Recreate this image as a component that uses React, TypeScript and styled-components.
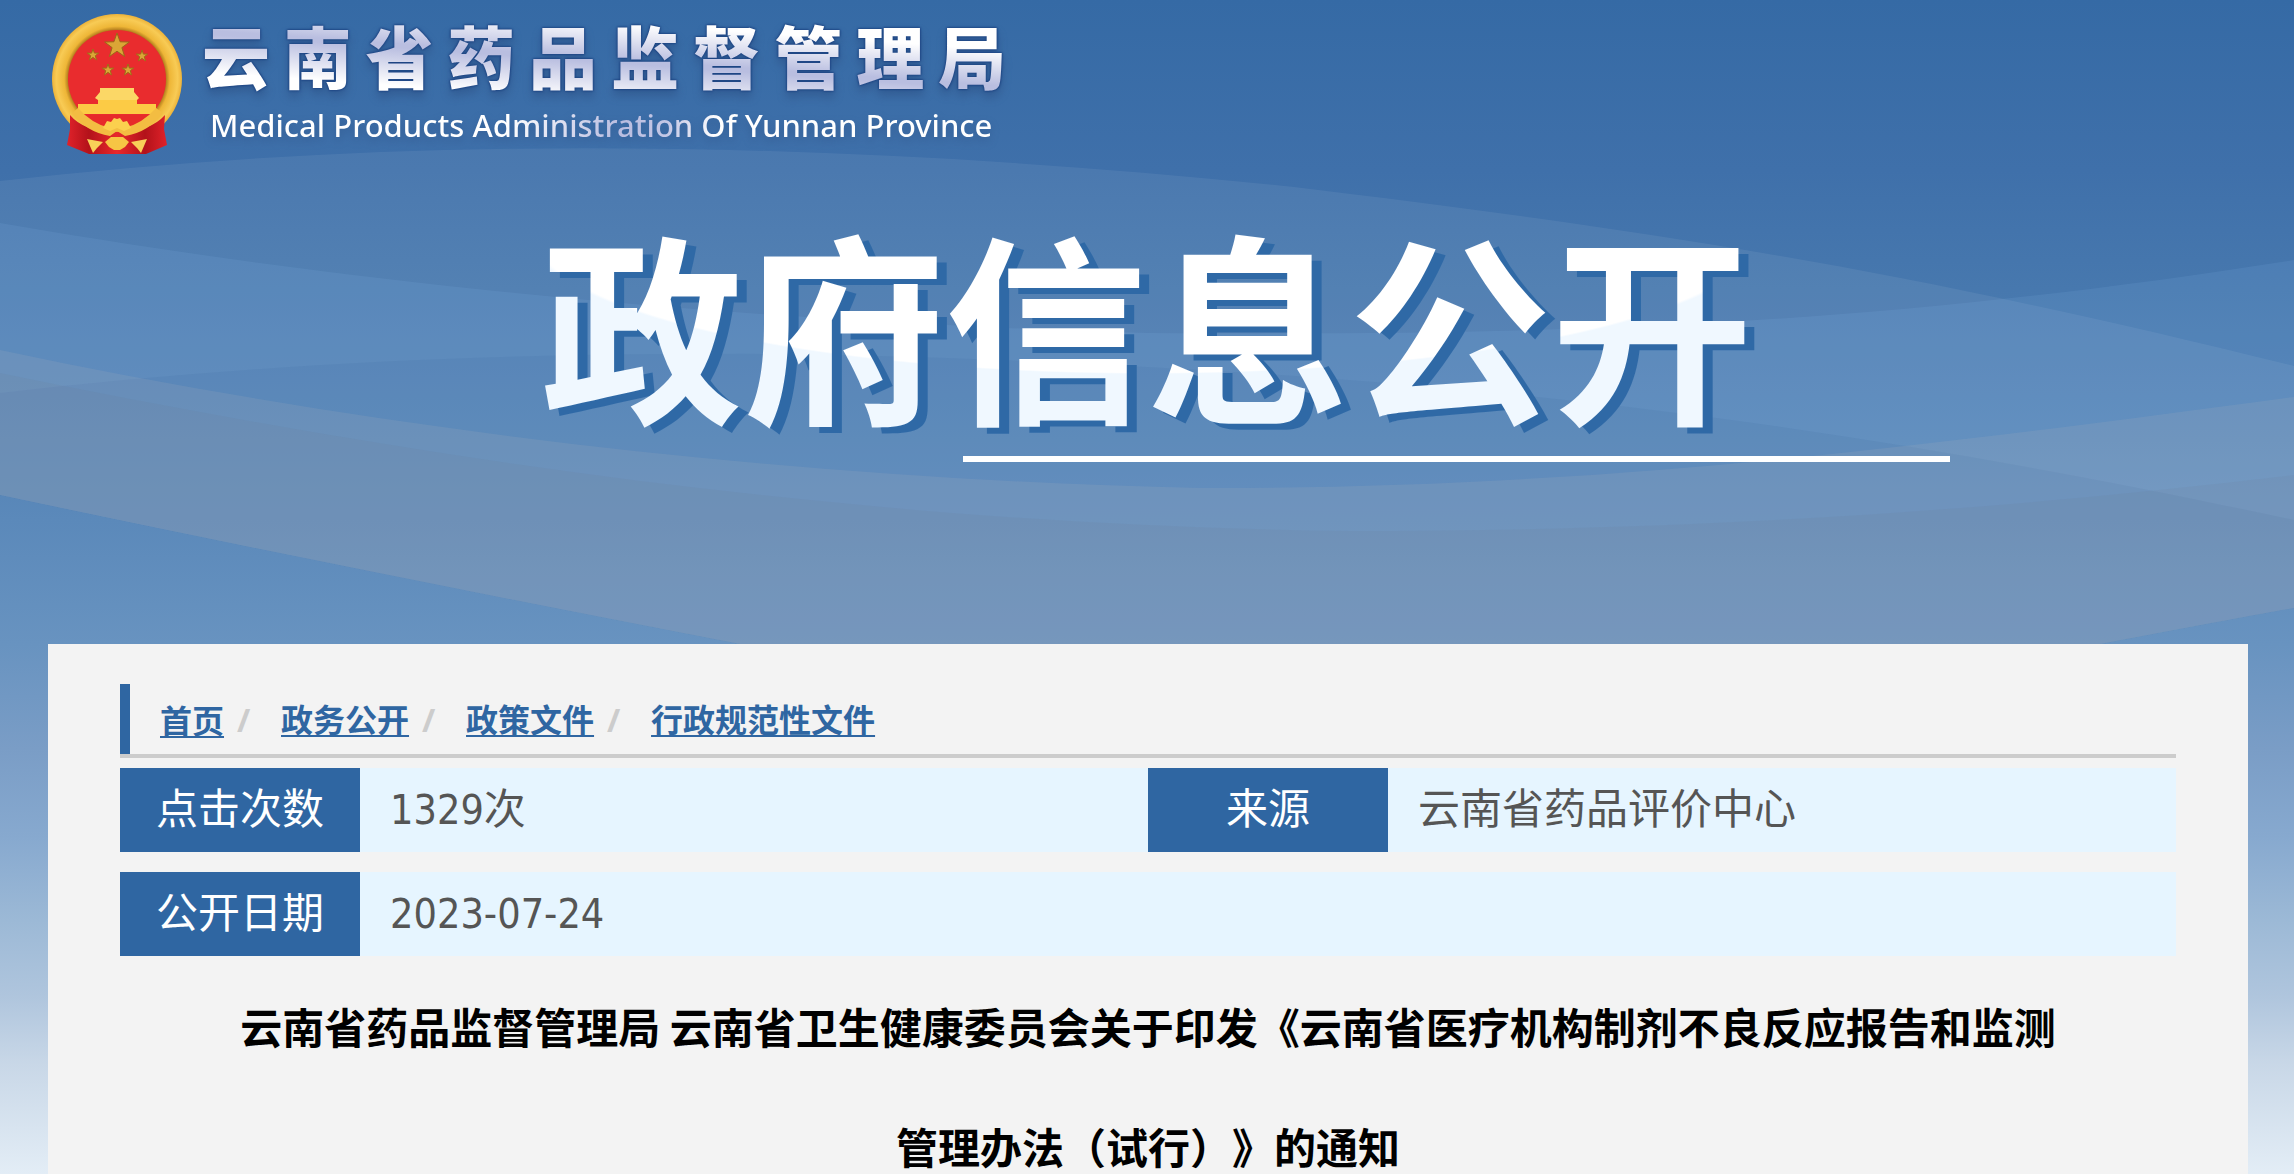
import React from "react";
import styled, { createGlobalStyle } from "styled-components";

const blue = "#2f66a2";
const sans = '"Noto Sans CJK SC", sans-serif';
const mixed = '"DejaVu Sans Condensed", "Noto Sans CJK SC", sans-serif';

const GlobalStyle = createGlobalStyle`
  *, *::before { box-sizing: border-box; }
  body { margin: 0; font-family: ${sans}; }
`;

const Page = styled.div`
  position: relative;
  display: flex;
  flex-direction: column;
  min-height: 100vh;
  overflow: hidden;
  background: linear-gradient(
    #356aa5 0px, #3f70aa 170px, #4778ae 290px, #5382b5 440px, #5b89ba 520px,
    #6893c0 644px, #7a9dc6 749px, #87a9cf 838px, #9cb9d6 921px, #afc5dd 996px,
    #c8d7e7 1063px, #e3edf6 1174px
  );
`;

const Waves = styled.svg`
  position: absolute;
  top: 0;
  left: 0;
  width: 100%;
  height: 700px;
`;

const Header = styled.header`
  position: relative;
  display: flex;
  flex-direction: column;
  height: 644px;
`;

const Brand = styled.a`
  display: flex;
  gap: 20px;
  padding: 6px 0 0 52px;
  color: #fff;
  text-decoration: none;
`;

const EmblemArt = styled.svg`
  width: 130px;
  height: 140px;
  margin-top: 8px;
`;

const BrandText = styled.span`
  display: flex;
  flex-direction: column;
  width: 804px;
`;

const BrandName = styled.span`
  font-size: 68px;
  font-weight: 900;
  line-height: 98px;
  text-align: justify;
  text-align-last: justify;
  color: transparent;
  background: linear-gradient(184deg, #fff 44px, #b9bee0 80px, #b9bee0 84px, #fff 122px);
  background-clip: text;
  filter: drop-shadow(0 0 1px #1c4382) drop-shadow(0 0 1px #1c4382) drop-shadow(0 6px 4px rgba(40, 70, 120, 0.4));
`;

const BrandEnglish = styled.span`
  padding-left: 8px;
  font-family: "Noto Sans", sans-serif;
  font-size: 31px;
  font-weight: 500;
  line-height: 42px;
  white-space: nowrap;
  color: transparent;
  background: linear-gradient(100deg, #fff 38%, #b9bde0 52%, #c4c8e6 58%, #fff 64%);
  background-clip: text;
  filter: drop-shadow(0 4px 4px rgba(40, 70, 120, 0.4));
`;

const Banner = styled.h1`
  align-self: center;
  margin: 47px 0 0;
  font-size: 202px;
  font-weight: 700;
  line-height: 240px;
  color: transparent;
  background: radial-gradient(620px 143px at 50% 30px, #fff 99%, #f0f8ff 100%);
  background-clip: text;
  filter: drop-shadow(10px 6px 0 #2f69a6);
`;

const BannerRule = styled.hr`
  width: 43%;
  height: 6px;
  margin: 15px 0 0 42%;
  border: 0;
  background: #fff;
`;

const Panel = styled.main`
  position: relative;
  flex: 1;
  margin: 0 46px 0 48px;
  padding: 40px 72px 0;
  background: #f3f3f3;
`;

const Crumbs = styled.nav`
  border-bottom: 4px solid #ccc;
`;

const CrumbList = styled.ol`
  display: flex;
  align-items: center;
  height: 70px;
  margin: 0;
  padding: 0 0 0 30px;
  border-left: 10px solid ${blue};
  list-style: none;
`;

const Crumb = styled.li`
  font-size: 32px;
  font-weight: 700;
  line-height: 48px;

  & + &::before {
    content: "/";
    display: inline-block;
    width: 57px;
    padding-left: 13px;
    color: #ccc;
    font-family: "Noto Sans", sans-serif;
  }
`;

const CrumbLink = styled.a`
  color: ${blue};
  text-decoration: underline;
  text-decoration-thickness: 2px;
  text-underline-offset: 3px;
`;

const Facts = styled.table`
  width: 100%;
  margin-top: 10px;
  border-collapse: collapse;
  table-layout: fixed;
  font-family: ${mixed};
  font-size: 42px;
  line-height: 84px;
`;

const LabelColumn = styled.col`
  width: 240px;
`;

const FactRow = styled.tr`
  border-bottom: 20px solid #f3f3f3;
  &:last-child { border-bottom: 0; }
`;

const FactLabel = styled.th`
  padding: 0;
  background: ${blue};
  color: #fff;
  font-weight: 400;
  text-align: center;
`;

const FactValue = styled.td`
  padding: 0 30px;
  background: #e6f5ff;
  color: #555;
`;

const Figure = styled.span`
  font-size: 41px;
`;

const Title = styled.h2`
  margin: 10px 0 0;
  padding: 0 100px;
  font-size: 42px;
  font-weight: 700;
  line-height: 120px;
  text-align: center;
  text-spacing-trim: space-all;
  color: #000;
`;

const crumbs = ["首页", "政务公开", "政策文件", "行政规范性文件"];

const starPoints = (cx: number, cy: number, r: number) =>
  Array.from({ length: 10 }, (_, i) => {
    const a = (Math.PI / 5) * i - Math.PI / 2;
    const d = i % 2 ? r * 0.4 : r;
    return `${(cx + d * Math.cos(a)).toFixed(1)},${(cy + d * Math.sin(a)).toFixed(1)}`;
  }).join(" ");

function Emblem() {
  return (
    <EmblemArt viewBox="0 0 130 140" role="img" aria-label="国徽">
      <defs>
        <radialGradient id="ring" cx="65" cy="65" r="66" gradientUnits="userSpaceOnUse">
          <stop offset="0.74" stopColor="#b07a1c" />
          <stop offset="0.8" stopColor="#eeb637" />
          <stop offset="0.92" stopColor="#f8cb55" />
          <stop offset="1" stopColor="#e9ad34" />
        </radialGradient>
        <linearGradient id="drape" x1="0" x2="1">
          <stop offset="0" stopColor="#e0222a" />
          <stop offset="0.22" stopColor="#b3121a" />
          <stop offset="0.5" stopColor="#e8282c" />
          <stop offset="0.78" stopColor="#b3121a" />
          <stop offset="1" stopColor="#e0222a" />
        </linearGradient>
      </defs>
      <circle cx="65" cy="65" r="65" fill="url(#ring)" />
      <circle cx="65" cy="65" r="49" fill="#e92c2e" />
      <polygon points={starPoints(65, 32, 13)} fill="#dba536" stroke="#9b6818" />
      <polygon points={starPoints(41, 41, 6)} fill="#dba536" stroke="#a06c18" />
      <polygon points={starPoints(90, 42, 6)} fill="#dba536" stroke="#a06c18" />
      <polygon points={starPoints(56, 56, 6)} fill="#dba536" stroke="#a06c18" />
      <polygon points={starPoints(76, 56, 6)} fill="#dba536" stroke="#a06c18" />
      <path d="M48 74h34v4l5 6-2 2v4H46v-4l-3-2 5-6z" fill="#fbd766" />
      <path d="M46 86h39v4h19v10H26V90h20z" fill="#fccb45" />
      <path d="M31 101h68q-12 16-34 16t-34-16z" fill="#e72a2a" />
      <path d="M18 101q14 17 47 17t48-17l-1 14 3 16-21 9H37l-22-9 3-16z" fill="url(#drape)" />
      <path d="M20 99q14 19 38 23l7-5 8 5q24-4 38-23l-7-5q-14 16-32 20H58q-18-4-32-20z" fill="#f3bd42" />
      <path d="M51 114l4-7 4 1 3-4 3 1 3-1 3 4 4-1 4 7-7 3-7-3-7 3z" fill="#fbd04e" />
      <path d="M53 128l6-5h12l6 5-4 5-5 3h-6l-5-3z" fill="#f7c544" />
      <path d="M35 125l16 3-6 6-4 5z" fill="#f8cf58" />
      <path d="M95 125l-16 3 6 6 4 5z" fill="#f8cf58" />
    </EmblemArt>
  );
}

const lowerEdge = "L2294 608 Q2200 625 2080 648 Q1410 800 740 644 Q330 565 0 495 Z";

function Backdrop() {
  return (
    <Waves viewBox="0 0 2294 700" preserveAspectRatio="none" aria-hidden="true">
      <path d={`M0 181 C400 135 820 138 1294 187 C1650 230 1900 268 2294 366 ${lowerEdge}`} fill="rgba(255,255,255,0.065)" />
      <path d={`M0 223 C300 275 680 320 1150 333 C1600 336 1900 322 2294 260 ${lowerEdge}`} fill="rgba(140,190,235,0.12)" />
      <path d={`M0 393 C300 358 640 345 1000 360 C1500 380 1850 425 2294 520 ${lowerEdge}`} fill="rgba(40,85,145,0.09)" />
      <path d={`M0 350 C400 435 820 480 1200 488 C1580 489 1900 450 2294 397 ${lowerEdge}`} fill="rgba(180,180,190,0.15)" />
      <path d={`M0 373 C400 455 850 525 1350 531 C1700 531 2000 510 2294 475 ${lowerEdge}`} fill="rgba(110,115,135,0.1)" />
    </Waves>
  );
}

export default function App() {
  return (
    <Page>
      <GlobalStyle />
      <Backdrop />
      <Header>
        <Brand href="#">
          <Emblem />
          <BrandText>
            <BrandName>云南省药品监督管理局</BrandName>
            <BrandEnglish>Medical Products Administration Of Yunnan Province</BrandEnglish>
          </BrandText>
        </Brand>
        <Banner>政府信息公开</Banner>
        <BannerRule />
      </Header>
      <Panel>
        <Crumbs aria-label="当前位置">
          <CrumbList>
            {crumbs.map((name) => (
              <Crumb key={name}>
                <CrumbLink href="#">{name}</CrumbLink>
              </Crumb>
            ))}
          </CrumbList>
        </Crumbs>
        <Facts>
          <colgroup>
            <LabelColumn />
            <col />
            <LabelColumn />
            <col />
          </colgroup>
          <tbody>
            <FactRow>
              <FactLabel scope="row">点击次数</FactLabel>
              <FactValue><Figure>1329</Figure>次</FactValue>
              <FactLabel scope="row">来源</FactLabel>
              <FactValue>云南省药品评价中心</FactValue>
            </FactRow>
            <FactRow>
              <FactLabel scope="row">公开日期</FactLabel>
              <FactValue colSpan={3}><Figure>2023-07-24</Figure></FactValue>
            </FactRow>
          </tbody>
        </Facts>
        <Title>
          云南省药品监督管理局 云南省卫生健康委员会关于印发《云南省医疗机构制剂不良反应报告和监测管理办法（试行）》的通知
        </Title>
      </Panel>
    </Page>
  );
}
